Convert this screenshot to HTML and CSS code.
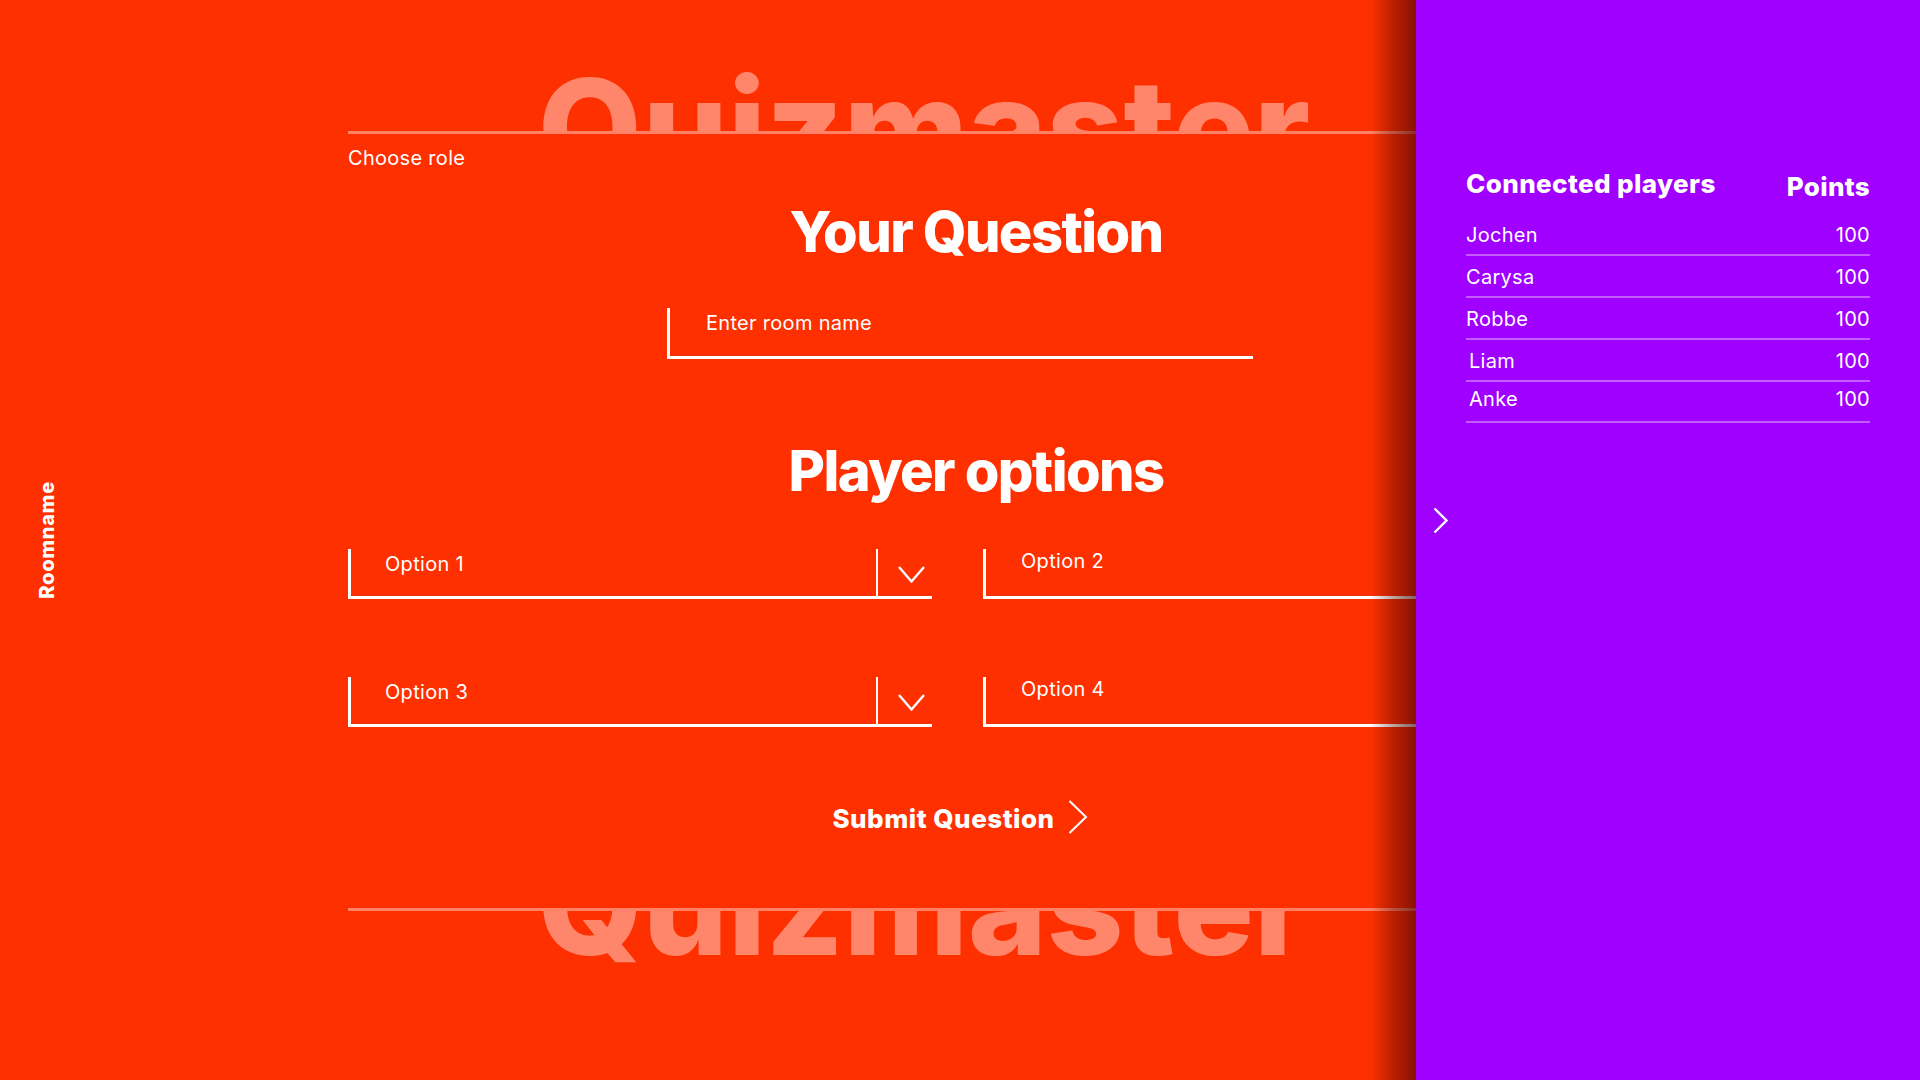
FILE: index.html
```html
<!DOCTYPE html>
<html lang="en">
<head>
<meta charset="utf-8">
<title>Quizmaster – Your Question</title>
<link rel="stylesheet" href="styles.css">
</head>
<body>
<div class="page">
  <aside class="rail">
    <span class="roomname">Roomname</span>
  </aside>

  <main class="main">
    <div class="wm wm-top"><div class="wm-text">Quizmaster</div></div>

    <div class="role">Choose role</div>

    <h1 class="heading heading-question">Your Question</h1>

    <div class="field field-room">
      <span class="placeholder">Enter room name</span>
    </div>

    <h2 class="heading heading-options">Player options</h2>

    <div class="options">
      <div class="select">
        <span class="select-label">Option 1</span>
        <span class="select-arrow">
          <svg width="27" height="17" viewBox="0 0 27 17"><polyline points="1,1 13.5,15.5 26,1" fill="none" stroke="#fff" stroke-width="2.4"/></svg>
        </span>
      </div>
      <div class="field field-option"><span class="placeholder">Option 2</span></div>
      <div class="select">
        <span class="select-label">Option 3</span>
        <span class="select-arrow">
          <svg width="27" height="17" viewBox="0 0 27 17"><polyline points="1,1 13.5,15.5 26,1" fill="none" stroke="#fff" stroke-width="2.4"/></svg>
        </span>
      </div>
      <div class="field field-option"><span class="placeholder">Option 4</span></div>
    </div>

    <div class="submit-row">
      <button class="submit" type="button">
        <span class="submit-text">Submit Question</span>
        <svg class="submit-icon" width="20" height="34" viewBox="0 0 20 34"><polyline points="1.5,1 18,17 1.5,33" fill="none" stroke="#fff" stroke-width="2"/></svg>
      </button>
    </div>

    <div class="wm wm-bottom"><div class="wm-text">Quizmaster</div></div>
  </main>

  <section class="panel">
    <button class="panel-toggle" type="button">
      <svg width="16" height="27" viewBox="0 0 16 27"><polyline points="1.5,1.5 13.5,13.5 1.5,25.5" fill="none" stroke="#fff" stroke-width="2.4"/></svg>
    </button>
    <div class="panel-head">
      <span class="panel-title">Connected players</span>
      <span class="panel-points">Points</span>
    </div>
    <ul class="players">
      <li class="player"><span>Jochen</span><span>100</span></li>
      <li class="player"><span>Carysa</span><span>100</span></li>
      <li class="player"><span>Robbe</span><span>100</span></li>
      <li class="player player-indent"><span>Liam</span><span>100</span></li>
      <li class="player player-indent player-last"><span>Anke</span><span>100</span></li>
    </ul>
  </section>
</div>
</body>
</html>
```

FILE: styles.css
```css
* { box-sizing: border-box; }

html, body {
  margin: 0;
  padding: 0;
}

body {
  background: #ff3000;
  color: #fff;
  font-family: Inter, "Noto Sans", "Liberation Sans", sans-serif;
  overflow: hidden;
}

.page {
  position: relative;
  width: 1920px;
  height: 1080px;
  display: flex;
}

/* left rail with vertical room name */
.rail {
  width: 348px;
  flex: none;
  display: flex;
  align-items: center;
  padding-left: 37px;
}

.roomname {
  writing-mode: vertical-rl;
  transform: rotate(180deg);
  font-weight: 800;
  font-size: 20px;
  line-height: 20px;
  letter-spacing: 0.8px;
}

/* main column */
.main {
  width: 1224px;
  flex: none;
  display: flex;
  flex-direction: column;
}

.wm {
  overflow: hidden;
  color: rgba(255, 255, 255, 0.42);
}

.wm-text {
  font-weight: 800;
  font-size: 134px;
  line-height: 134px;
  letter-spacing: 0;
  white-space: nowrap;
  padding-left: 190px;
}

.wm-top {
  height: 134px;
  border-bottom: 3px solid rgba(255, 255, 255, 0.4);
}

.wm-top .wm-text {
  margin-top: 60px;
}

.wm-bottom {
  margin-top: 72px;
  flex: 1;
  border-top: 3px solid rgba(255, 255, 255, 0.4);
}

.wm-bottom .wm-text {
  margin-top: -72px;
}

.role {
  margin-top: 12px;
  font-size: 20px;
  line-height: 24px;
  letter-spacing: 0.3px;
}

.heading {
  margin: 0;
  font-weight: 800;
  font-size: 56px;
  line-height: 68px;
  text-align: center;
  padding-left: 32px;
  letter-spacing: -1.6px;
}

.heading-question { margin-top: 28px; }
.heading-options { margin-top: 78px; }

.field {
  border-left: 3px solid #fff;
  border-bottom: 3px solid #fff;
  height: 51px;
  font-size: 20px;
  line-height: 24px;
}

.placeholder {
  display: block;
  letter-spacing: 0.3px;
}

.field-room {
  width: 586px;
  margin: 42px auto 0;
  padding: 3px 0 0 36px;
}

.options {
  margin-top: 44px;
  display: grid;
  grid-template-columns: 584px 1fr;
  column-gap: 51px;
  row-gap: 78px;
}

.field-option {
  height: 50px;
  padding: 0 0 0 35px;
}

.select {
  display: flex;
  height: 50px;
  border-left: 3px solid #fff;
  border-bottom: 3px solid #fff;
  font-size: 20px;
  line-height: 24px;
}

.select-label {
  flex: 1;
  padding: 3px 0 0 34px;
  letter-spacing: 0.3px;
}

.select-arrow {
  width: 56px;
  flex: none;
  border-left: 2px solid #fff;
  display: flex;
  align-items: center;
  justify-content: center;
  padding: 3px 0 0 12px;
}

.submit-row {
  margin-top: 75px;
  display: flex;
  justify-content: center;
}

.submit {
  display: flex;
  align-items: center;
  gap: 13px;
  background: none;
  border: 0;
  padding: 0;
  color: #fff;
  font-family: inherit;
  font-weight: 800;
  font-size: 26px;
  line-height: 34px;
  letter-spacing: 0.5px;
  cursor: pointer;
}

.submit-icon {
  flex: none;
  display: block;
  margin-top: -4px;
}

/* right drawer */
.panel {
  position: absolute;
  top: 0;
  right: 0;
  width: 504px;
  height: 1080px;
  background: #a000ff;
  padding: 168px 50px 0;
}

.panel::before {
  content: "";
  position: absolute;
  top: 0;
  left: -46px;
  width: 46px;
  height: 100%;
  background: linear-gradient(to right, rgba(60, 0, 0, 0) 0%, rgba(60, 0, 0, 0.35) 50%, rgba(60, 0, 0, 0.62) 100%);
}

.panel-toggle {
  position: absolute;
  left: 17px;
  top: 507px;
  background: none;
  border: 0;
  padding: 0;
  display: block;
  cursor: pointer;
}

.panel-toggle svg { display: block; }

.panel-head {
  display: flex;
  justify-content: space-between;
  align-items: flex-start;
  font-weight: 800;
  font-size: 26px;
  line-height: 32px;
  margin-bottom: 11px;
}

.panel-title {
  letter-spacing: 0.4px;
}

.panel-points {
  margin-top: 3px;
  letter-spacing: 0.3px;
}

.players {
  list-style: none;
  margin: 0;
  padding: 0;
}

.player {
  display: flex;
  justify-content: space-between;
  font-size: 20px;
  line-height: 24px;
  padding: 9px 0 7px;
  border-bottom: 2px solid rgba(255, 255, 255, 0.36);
  letter-spacing: 0.3px;
}

.player-indent span:first-child {
  padding-left: 3px;
}

.player-last {
  padding: 5px 0 10px;
}
```
